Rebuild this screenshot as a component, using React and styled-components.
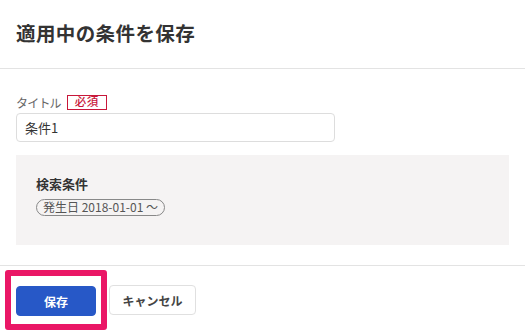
import React, { useState } from "react";
import styled, { createGlobalStyle } from "styled-components";

const GlobalStyle = createGlobalStyle`
  html, body {
    margin: 0;
    padding: 0;
    background: #ffffff;
  }
  body {
    font-family: "Noto Sans CJK JP", "Noto Sans", "Liberation Sans", sans-serif;
    color: #333;
  }
  * {
    box-sizing: border-box;
  }
`;

const App = () => {
  const [title, setTitle] = useState("条件1");

  return (
    <>
      <GlobalStyle />
      <Modal>
        <Header>
          <Title>適用中の条件を保存</Title>
        </Header>

        <Body>
          <LabelRow>
            <Label>タイトル</Label>
            <Required>必須</Required>
          </LabelRow>
          <Input value={title} onChange={(e) => setTitle(e.target.value)} />

          <ConditionBox>
            <ConditionTitle>検索条件</ConditionTitle>
            <Chip>発生日 2018-01-01 〜</Chip>
          </ConditionBox>
        </Body>

        <Footer>
          <Highlight>
            <Button $primary>保存</Button>
          </Highlight>
          <Button>キャンセル</Button>
        </Footer>
      </Modal>
    </>
  );
};

export default App;

const Modal = styled.div`
  width: 525px;
  background: #fff;
`;

const Header = styled.div`
  height: 69px;
  display: flex;
  align-items: center;
  padding: 0 16px 4px;
  border-bottom: 1px solid #e3e3e3;
`;

const Title = styled.h1`
  margin: 0;
  font-size: 19.5px;
  font-weight: 700;
  color: #333;
  letter-spacing: 0.4px;
`;

const Body = styled.div`
  padding: 25px 16px 20px;
  border-bottom: 1px solid #e3e3e3;
`;

const LabelRow = styled.div`
  display: flex;
  align-items: center;
  gap: 6px;
  height: 16px;
  margin-bottom: 3px;
`;

const Label = styled.span`
  font-size: 12px;
  color: #666;
  letter-spacing: -0.8px;
`;

const Required = styled.span`
  display: inline-flex;
  align-items: center;
  height: 15px;
  padding: 0 7px;
  border: 1px solid #c8173a;
  color: #c8173a;
  font-size: 11.5px;
  font-weight: 500;
  letter-spacing: 0.5px;
  line-height: 1;
`;

const Input = styled.input`
  display: block;
  width: 319px;
  height: 29px;
  padding: 0 8px;
  border: 1px solid #ddd;
  border-radius: 4px;
  font-family: inherit;
  font-size: 13px;
  color: #333;
  outline: none;
`;

const ConditionBox = styled.div`
  margin-top: 13px;
  height: 90px;
  padding: 20px 20px;
  background: #f5f3f3;
`;

const ConditionTitle = styled.div`
  font-size: 13px;
  font-weight: 700;
  color: #333;
  line-height: 18px;
`;

const Chip = styled.span`
  display: inline-flex;
  align-items: center;
  height: 17px;
  margin-top: 3px;
  padding: 0 6px;
  border: 1px solid #888;
  border-radius: 9px;
  font-size: 12px;
  color: #555;
  line-height: 1;
  white-space: pre;
`;

const Footer = styled.div`
  display: flex;
  align-items: center;
  gap: 2px;
  padding: 4px 0 0 5px;
`;

const Highlight = styled.div`
  display: inline-flex;
  padding: 10px 5px 8px;
  border: 6px solid #ea1766;
  border-radius: 3px;
`;

const Button = styled.button`
  height: 30px;
  padding: 0;
  width: ${(p) => (p.$primary ? "80px" : "87px")};
  border-radius: 4px;
  border: 1px solid ${(p) => (p.$primary ? "#2758c7" : "#e0e0e0")};
  background: ${(p) => (p.$primary ? "#2758c7" : "#fff")};
  color: ${(p) => (p.$primary ? "#fff" : "#444")};
  font-family: inherit;
  font-size: 12px;
  font-weight: 700;
  cursor: pointer;
`;
